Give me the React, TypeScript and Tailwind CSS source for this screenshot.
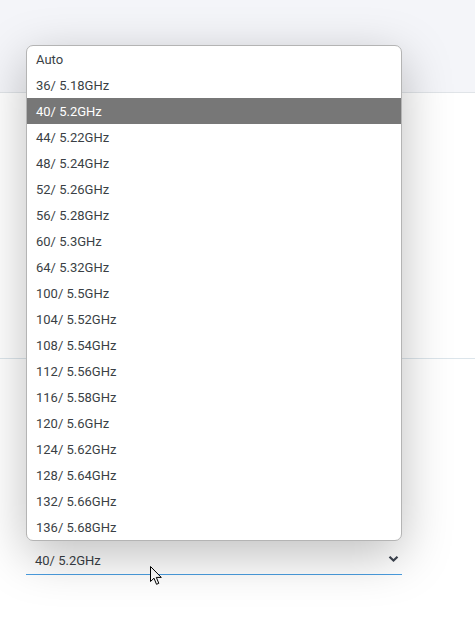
const channels = [
  'Auto',
  '36/ 5.18GHz',
  '40/ 5.2GHz',
  '44/ 5.22GHz',
  '48/ 5.24GHz',
  '52/ 5.26GHz',
  '56/ 5.28GHz',
  '60/ 5.3GHz',
  '64/ 5.32GHz',
  '100/ 5.5GHz',
  '104/ 5.52GHz',
  '108/ 5.54GHz',
  '112/ 5.56GHz',
  '116/ 5.58GHz',
  '120/ 5.6GHz',
  '124/ 5.62GHz',
  '128/ 5.64GHz',
  '132/ 5.66GHz',
  '136/ 5.68GHz',
];

const selected = '40/ 5.2GHz';

// label marks sit behind the open list; only their orange edge shows
function Field({ top, inputH }: { top: string; inputH: string }) {
  return (
    <div className={`${top} ml-[26px] w-[376px]`}>
      <div className="h-[16px] flex items-center">
        <div className="w-[3px] h-[10px] bg-[#e8912e]" />
      </div>
      <div className={`${inputH} border-b border-[#c8cdd2]`} />
    </div>
  );
}

export default function App() {
  return (
    <div className="relative w-[475px] h-[634px] overflow-hidden bg-white font-['Roboto',sans-serif] text-[#333]">
      {/* header strip */}
      <div className="h-[93px] bg-[#f4f5f9] border-b border-[#e0e4e8]" />

      {/* first section */}
      <div className="h-[266px] border-b border-[#dce5eb]">
        <Field top="pt-[102px]" inputH="h-[39px]" />
        <Field top="pt-[26px]" inputH="h-[29px]" />
      </div>

      {/* second section */}
      <div>
        <Field top="pt-[91px]" inputH="h-[38px]" />
        <div className="pt-[18px] ml-[26px] w-[376px]">
          <div className="h-[16px] flex items-center">
            <div className="w-[3px] h-[10px] bg-[#e8912e]" />
          </div>
          <div className="mt-[7px] h-[30px] flex items-center justify-between pl-[9px] pr-[3px] border-b border-[#4a9de0]">
            <span className="text-[13px] text-[#3a3f45] pt-[2px]">40/ 5.2GHz</span>
            <svg width="11" height="8" viewBox="0 0 11 8" className="mb-[2px]">
              <path d="M1.5 1.8 L5.5 5.6 L9.5 1.8" fill="none" stroke="#3d4450" strokeWidth="2.2" />
            </svg>
          </div>
        </div>
      </div>

      {/* mouse pointer */}
      <svg
        className="absolute left-[150px] top-[566px]"
        width="13"
        height="20"
        viewBox="0 0 13 20"
      >
        <path
          d="M0.5 0.5 L0.5 15.5 L4 12.2 L6.5 18.3 L8.8 17.3 L6.3 11.4 L11.3 11.4 Z"
          fill="#fff"
          stroke="#000"
          strokeWidth="1"
          strokeLinejoin="round"
        />
      </svg>

      {/* open dropdown list */}
      <ul className="absolute left-[26px] top-[45px] w-[376px] bg-white border border-[#b4b4b4] rounded-[7px] overflow-hidden shadow-[0_14px_50px_rgba(0,0,0,0.26)]">
        {channels.map((c) => (
          <li
            key={c}
            className={`h-[26px] flex items-center px-[9px] pt-[2px] text-[13px] ${
              c === selected ? 'bg-[#777777] text-white' : 'text-[#3a3f45]'
            }`}
          >
            {c}
          </li>
        ))}
      </ul>
    </div>
  );
}
